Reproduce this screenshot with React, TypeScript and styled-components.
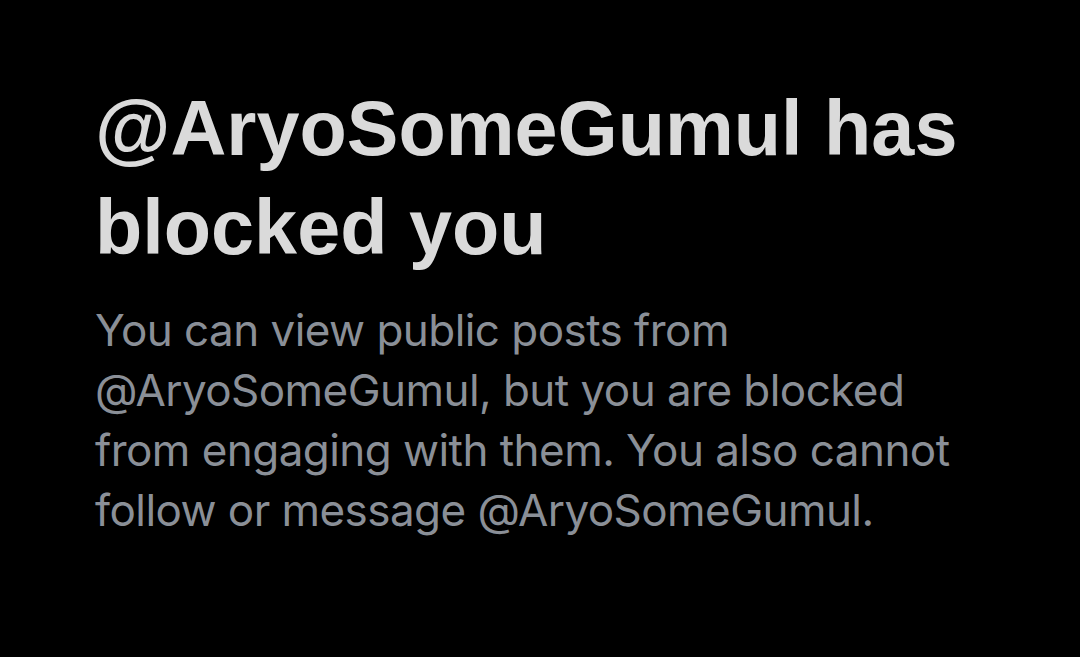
import styled, { createGlobalStyle } from "styled-components";

const GlobalStyle = createGlobalStyle`
  html, body {
    margin: 0;
    padding: 0;
    background: #000;
  }
`;

const Page = styled.div`
  width: 1080px;
  height: 657px;
  box-sizing: border-box;
  padding: 79px 0 0 95px;
  background: #000;
  display: flex;
  flex-direction: column;
  gap: 23px;
`;

const Title = styled.h1`
  margin: 0;
  font-family: "Liberation Sans", Arial, sans-serif;
  font-weight: 700;
  font-size: 77.4px;
  line-height: 99px;
  color: #dadada;
`;

const Body = styled.p`
  margin: 0;
  width: 920px;
  font-family: Inter, "Liberation Sans", sans-serif;
  font-weight: 400;
  font-size: 44px;
  line-height: 60px;
  letter-spacing: -0.55px;
  color: #8a8f97;
`;

export default function App() {
  return (
    <>
      <GlobalStyle />
      <Page>
        <Title>
          @AryoSomeGumul has
          <br />
          blocked you
        </Title>
        <Body>
          You can view public posts from
          <br />
          @AryoSomeGumul, but you are blocked
          <br />
          from engaging with them. You also cannot
          <br />
          follow or message @AryoSomeGumul.
        </Body>
      </Page>
    </>
  );
}
